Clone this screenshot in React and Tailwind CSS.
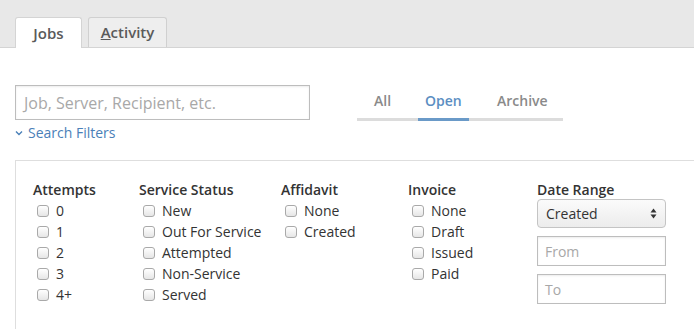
import React from 'react';

const columns = [
    { title: 'Attempts', items: ['0', '1', '2', '3', '4+'], width: 'w-[106px]' },
    { title: 'Service Status', items: ['New', 'Out For Service', 'Attempted', 'Non-Service', 'Served'], width: 'w-[142px]' },
    { title: 'Affidavit', items: ['None', 'Created'], width: 'w-[127px]' },
    { title: 'Invoice', items: ['None', 'Draft', 'Issued', 'Paid'], width: 'w-[129px]' },
];

const Check = ({ label }) => (
    <label className="flex items-center h-[21px] pl-[4px]">
        <span className="w-[12px] h-[12px] rounded-[3px] border border-[#a9a9a9] bg-gradient-to-b from-white to-[#e6e6e6] shrink-0"></span>
        <span className="ml-[7px] text-[14px] text-[#333]">{label}</span>
    </label>
);

const App = () => {
    return (
        <div className="w-[694px] h-[329px] bg-white overflow-hidden font-['Open_Sans',sans-serif]">
            {/* top tabs */}
            <div className="h-[48px] bg-[#e8e8e8] border-b border-[#d4d4d4] flex items-end pl-[15px] gap-[6px]">
                <div className="w-[67px] h-[31px] bg-white border border-[#d4d4d4] border-b-0 rounded-t-[3px] -mb-px flex items-center justify-center text-[15px] font-semibold text-[#5a5a5a]">
                    <span><span className="underline">J</span>obs</span>
                </div>
                <div className="w-[79px] h-[30px] bg-[#eeeeee] border border-[#d0d0d0] border-b-0 rounded-t-[3px] flex items-center justify-center text-[15px] font-semibold text-[#5a5a5a]">
                    <span><span className="underline">A</span>ctivity</span>
                </div>
            </div>

            {/* search + status tabs */}
            <div className="flex pl-[15px] pt-[37px]">
                <div className="w-[295px]">
                    <div className="h-[35px] border border-[#bdbdbd] shadow-[inset_0_1px_2px_rgba(0,0,0,0.08)] flex items-center pl-[8px] text-[16px] text-[#a8a8a8]">
                        Job, Server, Recipient, etc.
                    </div>
                    <div className="flex items-center mt-[2px] text-[14px] text-[#4a80b8]">
                        <svg width="8" height="6" viewBox="0 0 8 6" className="mr-[5px] mt-[1px]">
                            <path d="M1 1.5 L4 4.5 L7 1.5" fill="none" stroke="#4a80b8" strokeWidth="1.4" />
                        </svg>
                        Search Filters
                    </div>
                </div>
                <div className="ml-[47px] mt-[1px] w-[206px] h-[35px] flex items-end border-b-[3px] border-[#dcdcdc] text-[14px] font-semibold">
                    <div className="w-[61px] h-[32px] pt-[4px] pl-[17px] text-[#8a8a8a]">All</div>
                    <div className="w-[51px] h-[35px] pt-[4px] pl-[7px] text-[#5b8ec2] border-b-[3px] border-[#6a9ac8] -mb-[3px]">Open</div>
                    <div className="w-[94px] h-[32px] pt-[4px] pl-[28px] text-[#8a8a8a]">Archive</div>
                </div>
            </div>

            {/* filter panel */}
            <div className="ml-[15px] mt-[17px] border-t border-l border-[#dedede] pl-[17px] pt-[18px] flex h-[200px]">
                {columns.map((col) => (
                    <div key={col.title} className={col.width}>
                        <div className="text-[14px] font-semibold text-[#333] h-[21px] leading-[21px]">{col.title}</div>
                        {col.items.map((it) => (
                            <Check key={it} label={it} />
                        ))}
                    </div>
                ))}
                <div className="w-[129px]">
                    <div className="text-[14px] font-semibold text-[#333] h-[21px] leading-[21px]">Date Range</div>
                    <div className="h-[29px] mt-[-1px] rounded-[4px] border border-[#c4c4c4] bg-gradient-to-b from-[#fbfbfb] to-[#ececec] flex items-center justify-between px-[8px] text-[14px] text-[#333]">
                        Created
                        <svg width="7" height="11" viewBox="0 0 7 11">
                            <path d="M3.5 0.5 L6.5 4.5 L0.5 4.5 Z M3.5 10.5 L6.5 6.5 L0.5 6.5 Z" fill="#333" />
                        </svg>
                    </div>
                    <div className="h-[30px] mt-[8px] border border-[#bdbdbd] shadow-[inset_0_1px_2px_rgba(0,0,0,0.08)] flex items-center pl-[7px] text-[14px] text-[#a8a8a8]">From</div>
                    <div className="h-[30px] mt-[8px] border border-[#bdbdbd] shadow-[inset_0_1px_2px_rgba(0,0,0,0.08)] flex items-center pl-[7px] text-[14px] text-[#a8a8a8]">To</div>
                </div>
            </div>
        </div>
    );
};

export default App;
